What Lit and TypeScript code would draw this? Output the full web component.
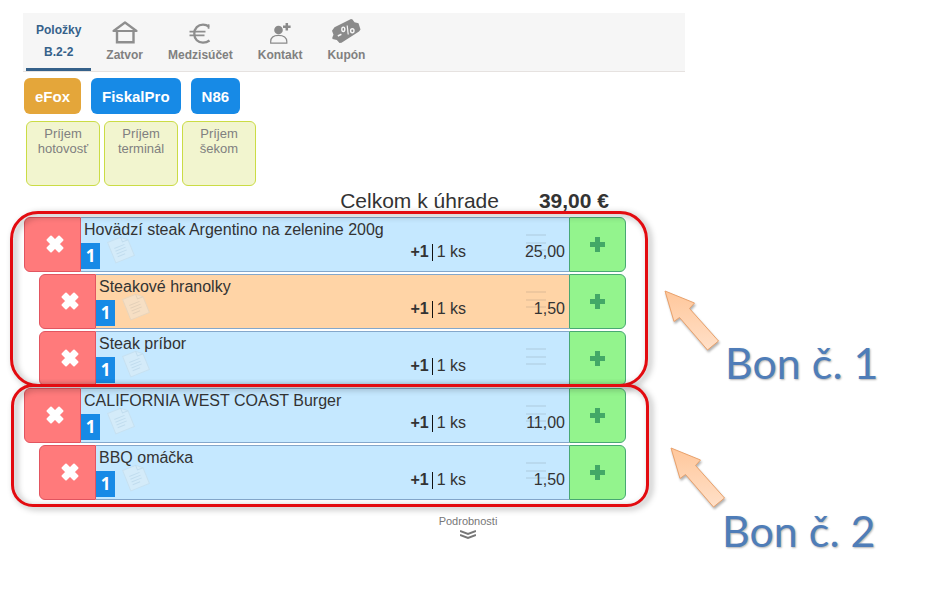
import { LitElement, html, css, svg, nothing } from "lit";
import { customElement, property } from "lit/decorators.js";
import { classMap } from "lit/directives/class-map.js";

interface Item {
  name: string;
  price?: string;
  child?: boolean;
  marked?: boolean;
}

const receipts: Item[][] = [
  [
    { name: "Hovädzí steak Argentino na zelenine 200g", price: "25,00" },
    { name: "Steakové hranolky", price: "1,50", child: true, marked: true },
    { name: "Steak príbor", child: true },
  ],
  [
    { name: "CALIFORNIA WEST COAST Burger", price: "11,00" },
    { name: "BBQ omáčka", price: "1,50", child: true },
  ],
];

const houseIcon = svg`
  <path d="M2.500 13 14 4.500 25.500 13z" fill="none" stroke="#8e8e8e" stroke-width="2.200" stroke-linejoin="round"/>
  <path d="M6 13v11.200h16.500V13" fill="none" stroke="#8e8e8e" stroke-width="2.400"/>`;

const euroIcon = svg`
  <path d="M23 8.800C21.300 7.400 19.300 6.700 17 6.700c-5 0-8.700 3.500-8.700 9s3.700 9 8.700 9c2.500 0 4.600-.7 6.500-2.200" fill="none" stroke="#8e8e8e" stroke-width="2.300"/>
  <path d="M22.600 6.300v4.400M3.500 13.700h16M3.500 17.300h15" fill="none" stroke="#8e8e8e" stroke-width="1.700"/>`;

const contactIcon = svg`
  <circle cx="12.500" cy="12" r="4.300" fill="#8a8a8a"/>
  <path d="M4.700 25.200v-1.700c0-3.800 2.500-6.200 7.800-6.200s8.300 2.400 8.300 6.200v1.700z" fill="none" stroke="#8a8a8a" stroke-width="1.200"/>
  <path d="M20.800 5v7.600M17 8.800h7.600" stroke="#8a8a8a" stroke-width="2.500"/>`;

const couponIcon = svg`
  <path d="M0 12.700 2.500 9.300 19 1 20.500 1.500 22.500 4.300 26.500 5.300 28.500 11.500 27 13.500 9.500 24.800 7.500 25 4.800 22 .5 21 .3 19.500 1.500 16.700z" fill="#8a8a8a"/>
  <path d="M5.800 18l3.600-1.700" stroke="#f6f6f6" stroke-width="1.500"/>
  <ellipse cx="11.300" cy="11.300" rx="1.500" ry="2.200" fill="none" stroke="#f6f6f6" stroke-width="1.400"/>
  <ellipse cx="20.300" cy="12.700" rx="1.700" ry="2" fill="none" stroke="#f6f6f6" stroke-width="1.400"/>
  <path d="M15.200 7.500l1 9" stroke="#f6f6f6" stroke-width="1.200"/>`;

const tabs = [
  { label: "Zatvor", icon: houseIcon },
  { label: "Medzisúčet", icon: euroIcon },
  { label: "Kontakt", icon: contactIcon },
  { label: "Kupón", icon: couponIcon },
];

@customElement("bill-item")
class BillItem extends LitElement {
  @property({ attribute: false }) item!: Item;

  static styles = css`
    :host {
      display: block;
    }
    .row {
      display: flex;
      height: 55px;
      box-sizing: border-box;
    }
    .child {
      margin-left: 15px;
    }
    button {
      flex: none;
      width: 57px;
      padding: 0;
      display: flex;
      align-items: center;
      justify-content: center;
    }
    .remove {
      background: #ff7a7b;
      border: 1px solid #e25560;
      border-radius: 6px 0 0 6px;
      padding: 0 0 2px 4px;
    }
    .add {
      background: #93f48d;
      border: 1px solid #48a873;
      border-radius: 0 6px 6px 0;
    }
    .body {
      position: relative;
      flex: 1;
      min-width: 0;
      box-sizing: border-box;
      border: solid #84a7cb;
      border-width: 1px 0;
      background: #c5e8ff;
      color: #333;
    }
    .marked .body {
      background: #ffd4a6;
    }
    .name {
      padding-left: 3px;
      font-size: 16px;
      line-height: 24px;
      white-space: nowrap;
    }
    .line {
      display: flex;
      align-items: center;
      height: 20px;
      font-size: 16px;
      line-height: 20px;
    }
    .count {
      align-self: flex-start;
      width: 19px;
      height: 26px;
      margin-top: 1px;
      background: #178ae6;
      color: #fff;
      font: bold 17px/25px "Open Sans", sans-serif;
      text-align: center;
    }
    .qty {
      margin-left: auto;
      display: flex;
      align-items: center;
    }
    .bar {
      width: 1px;
      height: 17px;
      margin: 0 4px 0 3px;
      background: #111;
    }
    .price {
      width: 99px;
      padding-right: 4px;
      text-align: right;
    }
    .memo {
      position: absolute;
      left: 24px;
      top: 15px;
      opacity: 0.4;
    }
    .grip {
      position: absolute;
      right: 23px;
      top: 15px;
    }
  `;

  render() {
    const { name, price, child, marked } = this.item;
    return html`
      <div class=${classMap({ row: true, child: !!child, marked: !!marked })}>
        <button class="remove" aria-label="Odstrániť">
          <svg width="20" height="20" viewBox="0 0 20 20">
            <path
              d="M6 2.500 10 6.500l4-4L17.500 6l-4 4 4 4-3.500 3.500-4-4-4 4L2.500 14l4-4-4-4z"
              fill="#fff" stroke="#fff" stroke-width="2" stroke-linejoin="round"/>
          </svg>
        </button>
        <div class="body">
          <svg class="memo" width="32" height="32" viewBox="0 0 32 32">
            <g transform="rotate(-22 16 16)">
              <path d="M6 5h14l6 5v17H6z" fill="#ebf1f2" stroke="#c9d6dc"/>
              <path d="M20 5v5h6M10 13h11M10 16h11M10 19h11M10 22h8" fill="none" stroke="#bccdd6"/>
            </g>
          </svg>
          <svg class="grip" width="20" height="20" viewBox="0 0 20 20">
            <path d="M0 2h20M0 10h20M0 17h20" stroke="#555" stroke-opacity=".1" stroke-width="2"/>
          </svg>
          <div class="name">${name}</div>
          <div class="line">
            <span class="count">1</span>
            <span class="qty"><b>+1</b><span class="bar"></span>1 ks</span>
            <span class="price">${price ?? nothing}</span>
          </div>
        </div>
        <button class="add" aria-label="Pridať">
          <svg width="15" height="15" viewBox="0 0 15 15">
            <path d="M5 0h5v5h5v5h-5v5H5v-5H0V5h5z" fill="#43a867"/>
          </svg>
        </button>
      </div>
    `;
  }
}

@customElement("app-root")
class AppRoot extends LitElement {
  static styles = css`
    :host {
      display: block;
      min-height: 100vh;
      box-sizing: border-box;
      padding: 13px 0 0 23px;
      background: #fff;
      font-family: "Liberation Sans", Arial, sans-serif;
    }
    button {
      font-family: inherit;
    }
    .tabs {
      display: flex;
      gap: 5px;
      height: 59px;
      box-sizing: border-box;
      margin-right: 251px;
      padding-left: 3px;
      background: #f6f6f6;
      border-bottom: 1px solid #e6e2e0;
    }
    .tab {
      display: flex;
      flex-direction: column;
      align-items: center;
      padding: 6px 10px 0;
      border: 0;
      background: none;
      color: #808080;
      font-weight: bold;
      font-size: 12px;
      line-height: 16px;
    }
    .tab svg {
      margin-bottom: 5px;
      overflow: visible;
    }
    .tab.active {
      line-height: 22px;
      color: #35618a;
      border-bottom: 3px solid #35618a;
    }
    .layout {
      display: grid;
      grid-template-columns: minmax(0, 1fr) 310px;
      padding-left: 1px;
    }
    .devices {
      display: flex;
      gap: 10px;
      margin-top: 6px;
    }
    .device {
      height: 36px;
      padding: 0 11px;
      border: 0;
      border-radius: 6px;
      background: #178ae6;
      color: #fff;
      font-size: 15px;
      font-weight: bold;
    }
    .device.warm {
      background: #e4a63a;
    }
    .payments {
      display: flex;
      gap: 4px;
      margin: 7px 0 0 2px;
    }
    .payment {
      display: flex;
      justify-content: center;
      width: 74px;
      height: 65px;
      padding: 4px 8px;
      border: 1px solid #cbdc45;
      border-radius: 6px;
      background: #f2f5cf;
      color: #808080;
      font-size: 13px;
      line-height: 15px;
    }
    .total {
      display: flex;
      justify-content: flex-end;
      gap: 40px;
      margin: 2px 17px 4px 0;
      font-size: 21px;
      line-height: 25px;
      color: #333;
    }
    .receipt {
      position: relative;
      display: grid;
      gap: 2px;
      margin-bottom: 2px;
    }
    .receipt::after {
      content: "";
      position: absolute;
      inset: -6px -22px -1px -14px;
      border: 3px solid #e30b10;
      border-radius: 28px;
      filter: drop-shadow(3px 2px 3px rgba(0, 0, 0, 0.38));
      pointer-events: none;
    }
    .receipt:last-of-type::after {
      inset: -4px -23px -7px -13px;
      border-radius: 22px;
    }
    .details {
      display: flex;
      flex-direction: column;
      align-items: center;
      gap: 2px;
      margin: 14px auto 0;
      padding: 0 0 0 286px;
      border: 0;
      background: none;
      color: #777;
      font-size: 11px;
      line-height: 14px;
    }
    .notes {
      display: flex;
      flex-direction: column;
      padding: 218px 0 0 38px;
    }
    .note {
      margin: 0 0 64px;
    }
    .note svg {
      display: block;
      overflow: visible;
      filter: drop-shadow(1px 2px 1px rgba(0, 0, 0, 0.3));
    }
    .note figcaption {
      margin-top: -8px;
      padding-left: 61px;
      font: 43px/40px Lato, sans-serif;
      color: #4f7db8;
      text-shadow: 1px 1px 2px rgba(0, 0, 0, 0.3);
      white-space: nowrap;
    }
    .note.second {
      padding-left: 6px;
    }
    .note.second figcaption {
      margin-top: 3px;
      padding-left: 52px;
    }
  `;

  private note(text: string, second: boolean) {
    return html`
      <figure class=${classMap({ note: true, second })}>
        <svg width="56" height="61" viewBox="0 0 56 61" aria-hidden="true">
          <defs>
            <linearGradient id="peach" x1="0" y1="0" x2="0" y2="1">
              <stop offset="0" stop-color="#ffc79b"/>
              <stop offset="1" stop-color="#ffe0c8"/>
            </linearGradient>
          </defs>
          <path d="M1 1 30.500 13l-5 5.500L54.500 51l-11 9-28-32.500-5.500 4z" fill="url(#peach)" stroke="#e9a16b"/>
        </svg>
        <figcaption>${text}</figcaption>
      </figure>
    `;
  }

  render() {
    return html`
      <nav class="tabs">
        <button class="tab active"><span>Položky</span><span>B.2-2</span></button>
        ${tabs.map(
          (tab) => html`
            <button class="tab">
              <svg width="28" height="23" viewBox="0 1 28 23">${tab.icon}</svg>
              <span>${tab.label}</span>
            </button>
          `,
        )}
      </nav>
      <div class="layout">
        <main>
          <div class="devices">
            <button class="device warm">eFox</button>
            <button class="device">FiskalPro</button>
            <button class="device">N86</button>
          </div>
          <div class="payments">
            <button class="payment">Príjem hotovosť</button>
            <button class="payment">Príjem terminál</button>
            <button class="payment">Príjem šekom</button>
          </div>
          <div class="total"><span>Celkom k úhrade</span><b>39,00 €</b></div>
          ${receipts.map(
            (items) => html`
              <section class="receipt">
                ${items.map((item) => html`<bill-item .item=${item}></bill-item>`)}
              </section>
            `,
          )}
          <button class="details">
            Podrobnosti
            <svg width="16" height="9" viewBox="0 0 16 9">
              <path d="M0 1l8 3 8-3M0 5l8 3 8-3" fill="none" stroke="#777" stroke-width="1.900"/>
            </svg>
          </button>
        </main>
        <aside class="notes">
          ${this.note("Bon č. 1", false)} ${this.note("Bon č. 2", true)}
        </aside>
      </div>
    `;
  }
}
